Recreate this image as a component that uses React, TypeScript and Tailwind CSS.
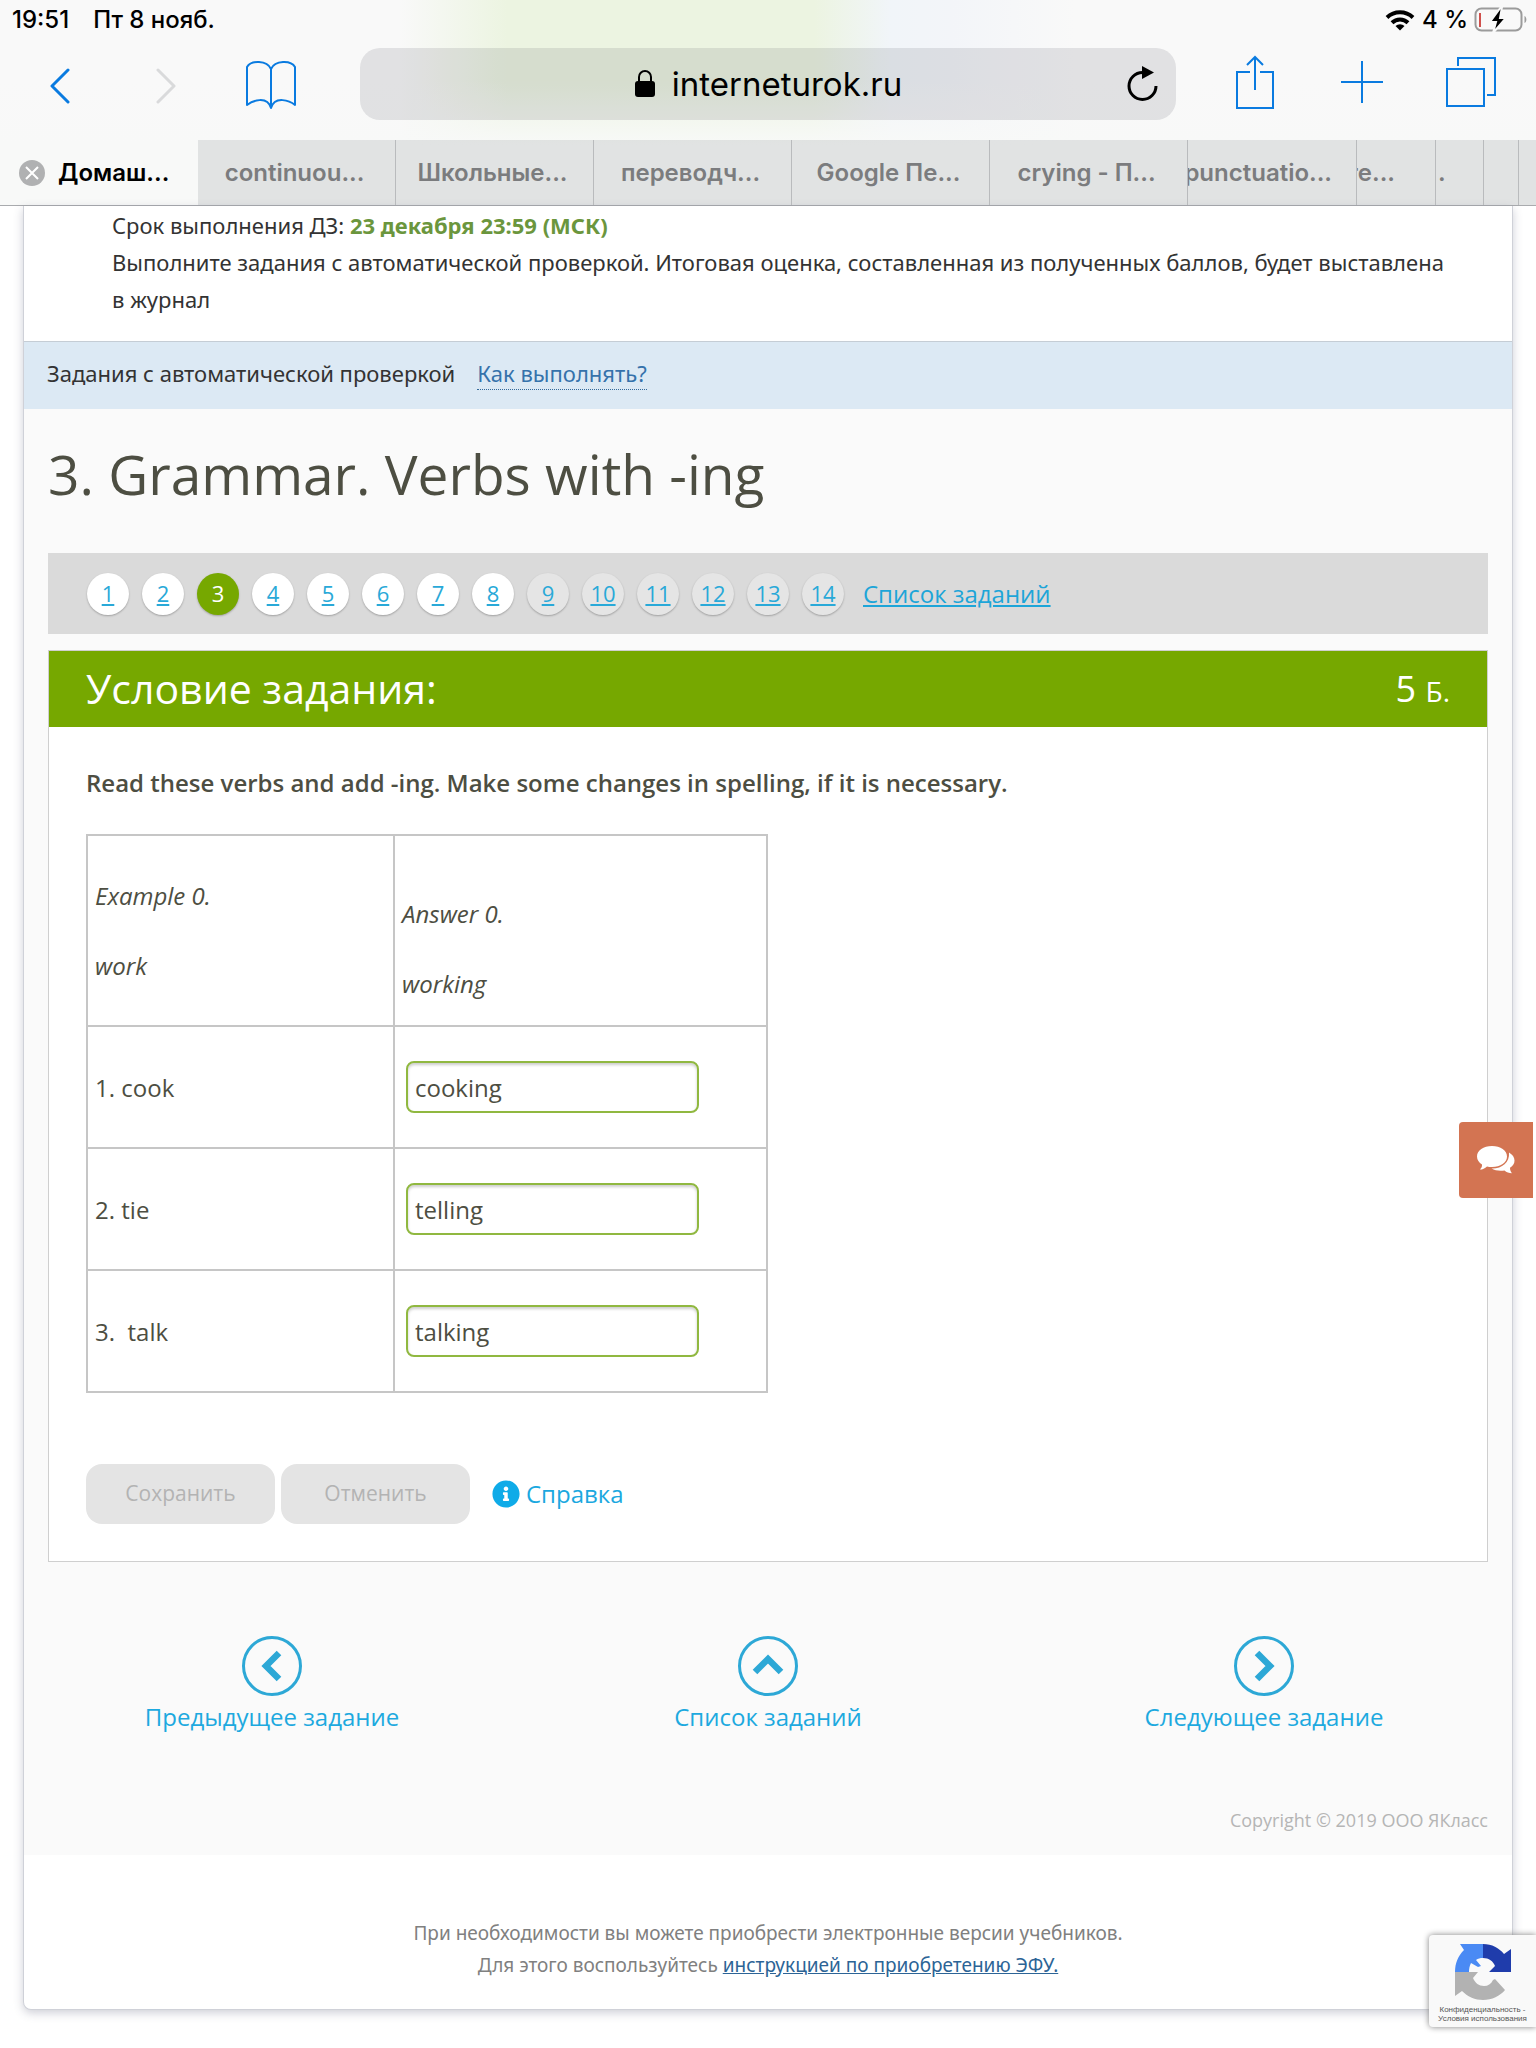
import React, { useState } from 'react';
import { FaInfoCircle } from 'react-icons/fa';

const tabs = ['continuou...', 'Школьные...', 'переводч...', 'Google Пе...', 'crying - П...'];

const tasks = Array.from({ length: 14 }, (_, i) => i + 1);
const CURRENT_TASK = 3;
const LAST_OPEN_TASK = 8;

const rows = [
  { id: 'cook', label: '1. cook', answer: 'cooking' },
  { id: 'tie', label: '2. tie', answer: 'telling' },
  { id: 'talk', label: '3.  talk', answer: 'talking' },
];

const StatusBar: React.FC = () => (
  <div className="flex h-10 items-center justify-between pl-3 pr-2 text-[24px] font-medium text-black">
    <div className="flex gap-6">
      <span>19:51</span>
      <span>Пт 8 нояб.</span>
    </div>
    <div className="flex items-center gap-1.5">
      <svg width="32" height="22" viewBox="0 0 32 22" fill="none" stroke="#000" strokeWidth="4">
        <path d="M3 8.500a19 19 0 0 1 26 0" />
        <path d="M8 13.800a11.500 11.500 0 0 1 16 0" />
        <path d="M16 21.500l-4.500-4.500a6.500 6.500 0 0 1 9 0z" fill="#000" stroke="none" />
      </svg>
      <span>4 %</span>
      <svg width="54" height="26" viewBox="0 0 54 26">
        <rect x="1.500" y="1.500" width="46" height="22" rx="6" fill="none" stroke="#9b9b9b" strokeWidth="2" />
        <rect x="5" y="6" width="2" height="14" fill="#d0504c" />
        <path d="M27 0L16 15h6l-3 11 13-15h-6l2-11z" fill="#000" stroke="#f9f9f9" strokeWidth="2" />
        <path d="M50.500 9c2.500 1 2.500 6 0 7z" fill="#9b9b9b" />
      </svg>
    </div>
  </div>
);

const Toolbar: React.FC = () => (
  <div className="flex h-25 items-center pb-3">
    <div className="flex w-[360px] shrink-0 items-center">
      <button type="button" aria-label="Назад" className="ml-12">
        <svg width="24" height="40" viewBox="0 0 24 40" fill="none" stroke="#0a7be0" strokeWidth="3" strokeLinecap="round" strokeLinejoin="round">
          <path d="M20 6L4 22l16 16" />
        </svg>
      </button>
      <button type="button" aria-label="Вперёд" className="ml-20">
        <svg width="26" height="40" viewBox="0 0 26 40" fill="none" stroke="#d9dadb" strokeWidth="3" strokeLinecap="round" strokeLinejoin="round">
          <path d="M6 6l16 16L6 38" />
        </svg>
      </button>
      <button type="button" aria-label="Закладки" className="ml-16">
        <svg width="58" height="52" viewBox="0 0 58 52" fill="none" stroke="#0a7be0" strokeWidth="2" strokeLinejoin="round">
          <path d="M29 11C25 2 9 2 5 9v38c5-4 20-10 24 3 4-13 19-7 24-3V9C49 2 33 2 29 11zM29 11v38" />
        </svg>
      </button>
    </div>
    <div className="flex h-18 flex-1 items-center rounded-[20px] bg-[#0f14231a] pl-16 pr-4">
      <div className="flex flex-1 items-center justify-center gap-4 pr-3">
        <svg width="22" height="30" viewBox="0 0 22 30">
          <path d="M5 14V8a6 6 0 0 1 12 0v6" fill="none" stroke="#000" strokeWidth="2" />
          <rect x="1" y="12" width="20" height="16" rx="3" />
        </svg>
        <span className="text-[33px] leading-10 text-black">interneturok.ru</span>
      </div>
      <button type="button" aria-label="Обновить">
        <svg width="36" height="40" viewBox="0 0 36 40">
          <path d="M32 22a13.500 13.500 0 1 1-13.500-13.500" fill="none" stroke="#000" strokeWidth="3" />
          <path d="M18 2v13l12-6.500z" />
        </svg>
      </button>
    </div>
    <div className="flex w-[360px] shrink-0 items-center pl-[58px]">
      <button type="button" aria-label="Поделиться" className="pb-1">
        <svg width="42" height="56" viewBox="0 0 42 56" fill="none" stroke="#0a7be0" strokeWidth="2">
          <path d="M16 18H3v36h36V18H26M21 36V3M13 11l8-8 8 8" />
        </svg>
      </button>
      <button type="button" aria-label="Новая вкладка" className="ml-16 pb-1">
        <svg width="44" height="44" viewBox="0 0 44 44" stroke="#0a7be0" strokeWidth="2">
          <path d="M22 1v42M1 22h42" />
        </svg>
      </button>
      <button type="button" aria-label="Вкладки" className="ml-[62px] pb-1">
        <svg width="50" height="50" viewBox="0 0 50 50" fill="none" stroke="#0a7be0" strokeWidth="2">
          <path d="M1 12h37v37H1zM12 9V1h37v37h-8" />
        </svg>
      </button>
    </div>
  </div>
);

const TabBar: React.FC = () => (
  <div className="grid h-[66px] grid-cols-[198fr_198fr_198fr_198fr_198fr_198fr_169fr_79fr_48fr_35fr_17fr] border-b border-[#a9abae] text-[24px] font-semibold text-[#7b7c7e]">
    <button type="button" className="flex items-center gap-3 overflow-hidden pl-[18px] text-black">
      <svg width="28" height="28" viewBox="0 0 28 28" className="shrink-0">
        <circle cx="14" cy="14" r="13" fill="#b0b1b2" />
        <path d="M8 8l12 12M20 8L8 20" stroke="#fff" strokeWidth="2" />
      </svg>
      Домаш...
    </button>
    {tabs.map((tab) => (
      <button key={tab} type="button" className="overflow-hidden border-r border-[#b9bbbd] bg-[#0f141f18] pr-1 whitespace-nowrap">
        {tab}
      </button>
    ))}
    <button type="button" className="flex items-center justify-end overflow-hidden border-r border-[#b9bbbd] bg-[#0f141f18] pr-6 whitespace-nowrap">
      punctuatio...
    </button>
    <button type="button" className="flex items-center justify-end overflow-hidden border-r border-[#b9bbbd] bg-[#0f141f18] pr-10 whitespace-nowrap">
      re...
    </button>
    <button type="button" className="flex items-center overflow-hidden border-r border-[#b9bbbd] bg-[#0f141f18] pl-0.5">
      .
    </button>
    <button type="button" aria-label="Вкладка" className="border-r border-[#b9bbbd] bg-[#0f141f18]" />
    <button type="button" aria-label="Вкладка" className="bg-[#0f141f18]" />
  </div>
);

const TaskPager: React.FC = () => (
  <nav className="flex h-[81px] items-center gap-[13px] bg-[#dadada] px-[39px]">
    {tasks.map((n) => {
      if (n === CURRENT_TASK) {
        return (
          <span key={n} className="flex size-[42px] items-center justify-center rounded-full bg-[#76a800] text-[22px] text-white shadow-[0_1px_2px_#0004]">
            {n}
          </span>
        );
      }
      return (
        <a
          key={n}
          href={`#task-${n}`}
          className={`flex size-[42px] items-center justify-center rounded-full text-[22px] text-[#29a9d8] underline shadow-[0_1px_2px_#0004] ${
            n <= LAST_OPEN_TASK ? 'bg-white' : 'bg-[#e5e5e5]'
          }`}
        >
          {n}
        </a>
      );
    })}
    <a href="#tasks" className="ml-1.5 text-[24px] text-[#1da5d8] underline">
      Список заданий
    </a>
  </nav>
);

const NavLink: React.FC<{ title: string; arrow: string }> = ({ title, arrow }) => (
  <a href="#nav" className="flex flex-1 flex-col items-center gap-0.5 text-[24px] leading-9 text-[#1da9df]">
    <svg width="62" height="62" viewBox="0 0 62 62" fill="none" stroke="#2da8d6">
      <circle cx="31" cy="31" r="28.500" strokeWidth="3" />
      <path d={arrow} strokeWidth="6.500" />
    </svg>
    {title}
  </a>
);

const App: React.FC = () => {
  const [answers, setAnswers] = useState<Record<string, string>>(
    Object.fromEntries(rows.map((r) => [r.id, r.answer]))
  );

  return (
    <div className="relative overflow-hidden bg-white pb-[37px] font-['Open_Sans','Noto_Sans',sans-serif] text-[#4d4e42]">
      {/* Browser chrome */}
      <header className="bg-[linear-gradient(to_bottom,transparent_80px,#f8f9f8_145px),linear-gradient(to_right,#f9f9f9_26%,#ecf4e1_33%,#ecf4e1_53%,#f1f5f9_58%,#f3f5f9_62%,#f9f9f9_70%)] font-[Inter,sans-serif]">
        <StatusBar />
        <Toolbar />
        <TabBar />
      </header>

      {/* Page card */}
      <main className="mx-[23px] rounded-b-lg border-x border-b border-[#cfd1d8] bg-white shadow-[0_3px_10px_#3c3f6040]">
        <section className="h-[135px] pl-[88px] pr-15 pt-px font-['Noto_Sans',sans-serif] text-[22px] leading-[37px] text-[#333]">
          <p>
            Срок выполнения ДЗ: <b className="text-[#6b963d]">23 декабря 23:59 (МСК)</b>
          </p>
          <p>
            Выполните задания с автоматической проверкой. Итоговая оценка, составленная из полученных баллов, будет выставлена
            в журнал
          </p>
        </section>

        <section className="flex h-17 items-center gap-[22px] border-t border-[#c5cdd5] bg-[#dce9f4] px-[23px] pb-1 font-['Noto_Sans',sans-serif] text-[22px] text-[#333]">
          <span>Задания с автоматической проверкой</span>
          <a href="#help" className="border-b border-dotted border-[#34699a] leading-8 text-[#3572ab]">
            Как выполнять?
          </a>
        </section>

        <div className="bg-[#fafafa] px-6 pb-[15px]">
          <h1 className="pb-[39px] pt-[25px] text-[55px] leading-20">3. Grammar. Verbs with -ing</h1>
          <TaskPager />

          <section className="mt-4 border border-[#cfcfcf] bg-white">
            <div className="flex h-19 items-center justify-between bg-[#76a800] px-[37px] text-white">
              <h2 className="text-[41px]">Условие задания:</h2>
              <span className="text-[36px]">
                5 <span className="text-[28px]">Б.</span>
              </span>
            </div>

            <form className="px-[37px] pb-[37px] pt-9" onSubmit={(e) => e.preventDefault()}>
              <p className="text-[24px] font-semibold leading-10">
                Read these verbs and add -ing. Make some changes in spelling, if it is necessary.
              </p>

              <table className="mt-[31px] w-[682px] table-fixed border-collapse text-[24px] leading-[35px]">
                <tbody>
                  <tr className="h-[191px]">
                    <td className="w-[307px] border-2 border-[#c6c6c6] px-[7px] italic">
                      <p>Example 0.</p>
                      <p className="mt-[35px]">work</p>
                    </td>
                    <td className="border-2 border-[#c6c6c6] px-[7px] pt-[35px] italic">
                      <p>Answer 0.</p>
                      <p className="mt-[35px]">working</p>
                    </td>
                  </tr>
                  {rows.map((row) => (
                    <tr key={row.id} className="h-[122px]">
                      <td className="border-2 border-[#c6c6c6] px-[7px]">
                        <label htmlFor={row.id} className="whitespace-pre">
                          {row.label}
                        </label>
                      </td>
                      <td className="border-2 border-[#c6c6c6] px-[11px]">
                        <input
                          id={row.id}
                          type="text"
                          value={answers[row.id]}
                          onChange={(e) => setAnswers({ ...answers, [row.id]: e.target.value })}
                          className="block h-[52px] w-[293px] rounded-lg border-2 border-[#90b840] bg-white px-[7px] shadow-[inset_0_2px_3px_#0003]"
                        />
                      </td>
                    </tr>
                  ))}
                </tbody>
              </table>

              <div className="mt-[71px] flex items-center">
                <button type="button" disabled className="h-15 w-[189px] rounded-2xl bg-[#e4e4e4] text-[21px] text-[#b3b3b3]">
                  Сохранить
                </button>
                <button type="button" disabled className="ml-[6px] h-15 w-[189px] rounded-2xl bg-[#e4e4e4] text-[21px] text-[#b3b3b3]">
                  Отменить
                </button>
                <a href="#info" className="ml-[22px] flex items-center gap-1.5 text-[24px] text-[#1ba8df]">
                  <FaInfoCircle className="size-7 text-[#0fabe8]" />
                  Справка
                </a>
              </div>
            </form>
          </section>

          <nav className="-mx-6 mt-[73px] flex">
            <NavLink title="Предыдущее задание" arrow="M38 18L25 31l13 13" />
            <NavLink title="Список заданий" arrow="M18 37l13-13 13 13" />
            <NavLink title="Следующее задание" arrow="M24 18l13 13-13 13" />
          </nav>

          <p className="mt-[65px] text-right text-[18px] leading-10 text-[#b5b5b5]">Copyright © 2019 ООО ЯКласс</p>
        </div>

        <footer className="pb-[28px] pt-[62px] text-center font-['Noto_Sans',sans-serif] text-[19px] leading-8 text-[#808080]">
          <p>При необходимости вы можете приобрести электронные версии учебников.</p>
          <p>
            Для этого воспользуйтесь{' '}
            <a href="#efu" className="text-[#2c6496] underline">
              инструкцией по приобретению ЭФУ.
            </a>
          </p>
        </footer>
      </main>

      {/* Chat widget */}
      <button type="button" aria-label="Чат" className="absolute right-[3px] top-[1122px] flex h-[76px] w-[74px] items-center justify-center rounded-l-sm bg-[#d37452]">
        <svg width="40" height="30" viewBox="0 0 40 30" fill="#fff">
          <path d="M16 1c8.500 0 15 4.500 15 10.500S24.500 22 16 22c-2 0-3.500-.2-5-.6C9 23.500 6.500 24.500 4 24.500c1.500-1.500 2.200-3 2-5C3 17.500 1 15 1 11.500 1 5.500 7.500 1 16 1z" />
          <path d="M33 7.500c3.500 2 5.500 4.800 5.500 8 0 3-1.500 5.500-4.500 7.200 0 2 .5 3.800 2 5.500-3 0-5.500-1-7.500-2.800-5 .8-9.500 0-13-1.900C25 24 34 18 33 7.500z" />
        </svg>
      </button>

      {/* reCAPTCHA badge */}
      <div className="absolute right-0 top-[1935px] flex h-[92px] w-[107px] flex-col items-center rounded-l bg-[#f9f9f9] pt-2 shadow-[0_0_6px_#808080]">
        <svg width="58" height="58" viewBox="0 0 58 58">
          <path d="M6 1h23v14c-3 0-5 .5-7 2l5 6-3 1-7-4c-1.500 3-2 6-2 9H1C1 20 4 13 10 7z" fill="#4a8af4" />
          <path d="M29 1c9 0 16 4 21 10l7-5v23H35l6-6c-2-5-6-8-12-8z" fill="#1f3cab" />
          <path d="M1 29h23l-5 6c2 5 6 8 11 8 4 0 7-2 9-6l2-1 10 11c-5 6-13 10-22 10-8 0-15-3-21-9l-7 5z" fill="#b2b2b2" />
        </svg>
        <p className="pt-1 text-center font-['Liberation_Sans',sans-serif] text-[8px] leading-[9px] text-[#555]">
          Конфиденциальность -
          <br />
          Условия использования
        </p>
      </div>
    </div>
  );
};

export default App;
